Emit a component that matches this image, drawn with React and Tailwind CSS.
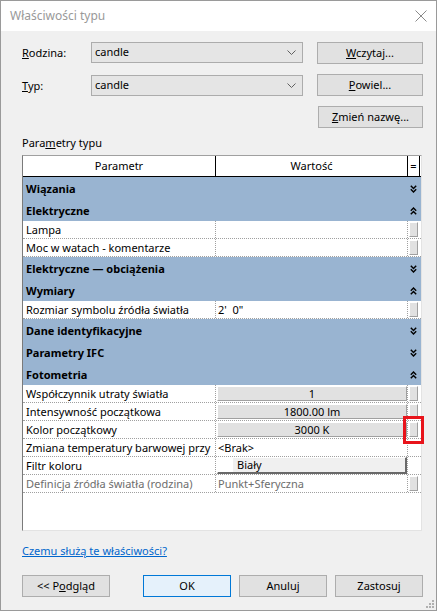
import React from "react";

const FONT = { fontFamily: '"Noto Sans", "Liberation Sans", sans-serif' };

function Chevron({ up }) {
  return (
    <svg width="7" height="8" viewBox="0 0 7 8" className="block">
      {up ? (
        <g fill="none" stroke="#000" strokeWidth="1.4">
          <path d="M0.8 3.8 L3.5 1 L6.2 3.8" />
          <path d="M0.8 7.2 L3.5 4.4 L6.2 7.2" />
        </g>
      ) : (
        <g fill="none" stroke="#000" strokeWidth="1.4">
          <path d="M0.8 0.8 L3.5 3.6 L6.2 0.8" />
          <path d="M0.8 4.2 L3.5 7 L6.2 4.2" />
        </g>
      )}
    </svg>
  );
}

function DropChevron() {
  return (
    <svg width="9" height="5" viewBox="0 0 9 5" className="block">
      <path d="M0.5 0.5 L4.5 4.5 L8.5 0.5" fill="none" stroke="#606060" strokeWidth="1" />
    </svg>
  );
}

function Group({ label, up }) {
  return (
    <div className="flex h-[22px] bg-[#99b4d1] pt-[2px] items-center">
      <div className="flex-1 pl-[3px] font-bold text-black whitespace-nowrap">{label}</div>
      <div className="w-[12px] flex justify-start pl-[1px]">
        <Chevron up={up} />
      </div>
    </div>
  );
}

function SmallBox() {
  return (
    <div className="ml-[1px] mt-[1px] w-[9px] h-[15px] bg-[#e1e1e1] border-t border-l border-t-white border-l-white border-r border-b border-r-[#a0a0a0] border-b-[#a0a0a0]" />
  );
}

function DataRow({ label, value, kind, eq = true, gray = false }) {
  return (
    <div className="flex h-[18px] border-b border-dotted border-[#a0a0a0]">
      <div
        className={`w-[193px] shrink-0 border-r border-dotted border-[#a0a0a0] pl-[3px] overflow-hidden whitespace-nowrap leading-[17px] ${
          gray ? "text-[#6d6d6d]" : "text-black"
        }`}
      >
        {label}
      </div>
      <div className="w-[192px] shrink-0 border-r border-dotted border-[#a0a0a0] overflow-hidden">
        {kind === "box" && (
          <div className="ml-[1px] mt-[1px] w-[190px] h-[15px] bg-[#e1e1e1] border-t border-l border-t-white border-l-white border-r border-b border-r-[#a0a0a0] border-b-[#a0a0a0] flex items-center justify-center leading-[14px] text-black">
            {value}
          </div>
        )}
        {kind === "text" && (
          <div className={`pl-[2px] leading-[17px] whitespace-pre ${gray ? "text-[#6d6d6d]" : "text-black"}`}>
            {value}
          </div>
        )}
        {kind === "color" && (
          <div className="ml-[1px] mt-[0px] w-[190px] h-[17px] flex border-t border-l border-t-white border-l-white border-r-2 border-b-2 border-r-[#696969] border-b-[#696969]">
            <div className="w-[15px] h-full bg-white" />
            <div className="flex-1 bg-[#f0f0f0] pl-[4px] leading-[14px] text-black">{value}</div>
          </div>
        )}
      </div>
      <div className="w-[12px] shrink-0">{eq && <SmallBox />}</div>
    </div>
  );
}

function Btn({ children, className = "" }) {
  return (
    <div
      className={`h-[22px] flex items-center justify-center bg-[#e1e1e1] border border-[#adadad] text-black ${className}`}
    >
      {children}
    </div>
  );
}

export default function App() {
  return (
    <div
      className="w-[437px] h-[611px] border border-[#9a9a9a] bg-[#f0f0f0] flex flex-col text-[11px] text-black relative overflow-hidden"
      style={FONT}
    >
      {/* Title bar */}
      <div className="h-[30px] bg-white flex items-center pl-[9px] pr-[8px] shrink-0">
        <div className="text-[12px] text-[#999999] flex-1">Właściwości typu</div>
        <svg width="12" height="12" viewBox="0 0 12 12" className="block mr-[1px]">
          <path d="M0.5 0.5 L11.5 11.5 M11.5 0.5 L0.5 11.5" stroke="#8a8a8a" strokeWidth="1" />
        </svg>
      </div>

      {/* Body */}
      <div className="flex-1 flex flex-col pl-[21px] pr-[13px]">
        {/* Row 1 */}
        <div className="flex mt-[11px] items-start">
          <div className="w-[69px] leading-[21px]">
            <span className="underline">R</span>odzina:
          </div>
          <div className="w-[212px] h-[21px] bg-[#e5e5e5] border border-[#acacac] flex items-center pl-[3px] pr-[6px]">
            <span className="flex-1">candle</span>
            <DropChevron />
          </div>
          <Btn className="ml-[14px] w-[106px]">
            <span>
              <span className="underline">W</span>czytaj...
            </span>
          </Btn>
        </div>
        {/* Row 2 */}
        <div className="flex mt-[10px] items-start">
          <div className="w-[69px] leading-[21px] mt-[1px]">
            <span className="underline">T</span>yp:
          </div>
          <div className="w-[212px] h-[21px] mt-[1px] bg-[#e5e5e5] border border-[#acacac] flex items-center pl-[3px] pr-[6px]">
            <span className="flex-1">candle</span>
            <DropChevron />
          </div>
          <Btn className="ml-[14px] w-[106px]">
            <span>
              <span className="underline">P</span>owiel...
            </span>
          </Btn>
        </div>
        {/* Row 3 */}
        <div className="flex mt-[10px] justify-end">
          <Btn className="w-[105px]">
            <span>
              <span className="underline">Z</span>mień nazwę...
            </span>
          </Btn>
        </div>

        <div className="mt-[7px] h-[15px] leading-[15px]">
          Para<span className="underline">m</span>etry typu
        </div>

        {/* Table */}
        <div className="mt-[5px] w-[400px] h-[376px] bg-white border border-l-[#7a7a7a] border-t-[#a0a0a0] border-r-[#e3e3e3] border-b-[#e3e3e3] flex flex-col overflow-hidden">
          <div className="flex h-[21px] border-b border-black shrink-0">
            <div className="w-[193px] border-r border-black flex items-center justify-center">Parametr</div>
            <div className="w-[192px] border-r border-black flex items-center justify-center">Wartość</div>
            <div className="w-[12px] border-r border-black flex items-center justify-center">=</div>
          </div>
          <Group label="Wiązania" />
          <Group label="Elektryczne" up />
          <DataRow label="Lampa" kind="none" />
          <DataRow label="Moc w watach - komentarze" kind="none" />
          <Group label="Elektryczne — obciążenia" />
          <Group label="Wymiary" up />
          <DataRow label="Rozmiar symbolu źródła światła" kind="text" value={"2'  0\""} />
          <Group label="Dane identyfikacyjne" />
          <Group label="Parametry IFC" />
          <Group label="Fotometria" up />
          <DataRow label="Współczynnik utraty światła" kind="box" value="1" />
          <DataRow label="Intensywność początkowa" kind="box" value="1800.00 lm" />
          <DataRow label="Kolor początkowy" kind="box" value="3000 K" />
          <DataRow label="Zmiana temperatury barwowej przy" kind="text" value="<Brak>" eq={false} />
          <DataRow label="Filtr koloru" kind="color" value="Biały" eq={false} />
          <DataRow label="Definicja źródła światła (rodzina)" kind="text" value="Punkt+Sferyczna" gray />
        </div>

        <div className="mt-[12px] h-[15px] leading-[15px]">
          <span className="text-[#0066cc] underline">Czemu służą te właściwości?</span>
        </div>

        <div className="mt-[17px] flex">
          <Btn className="w-[88px]">
            <span>
              {"<< P"}
              <span className="underline">o</span>dgląd
            </span>
          </Btn>
          <div className="ml-[33px] w-[88px] h-[22px] flex items-center justify-center bg-[#e5f1fb] border border-[#0078d7]">
            OK
          </div>
          <Btn className="ml-[8px] w-[88px]">Anuluj</Btn>
          <Btn className="ml-[8px] w-[88px]">Zastosuj</Btn>
        </div>
      </div>

      {/* Resize grip */}
      <svg width="8" height="8" viewBox="0 0 8 8" className="absolute right-[2px] bottom-[2px]">
        <g fill="#b0b0b0">
          <rect x="6" y="0" width="2" height="2" />
          <rect x="3" y="3" width="2" height="2" />
          <rect x="6" y="3" width="2" height="2" />
          <rect x="0" y="6" width="2" height="2" />
          <rect x="3" y="6" width="2" height="2" />
          <rect x="6" y="6" width="2" height="2" />
        </g>
      </svg>

      {/* Red highlight */}
      <div className="absolute left-[402px] top-[415px] w-[21px] h-[28px] border-[3px] border-[#e8141b]" />
    </div>
  );
}
